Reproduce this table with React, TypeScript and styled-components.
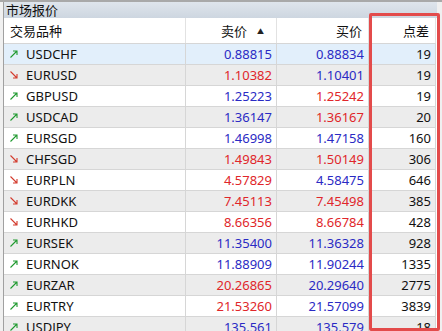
import React from 'react';
import styled, { createGlobalStyle } from 'styled-components';

// ===== Types =====
type Dir = 'up' | 'down';
type Tone = 'blue' | 'red';

interface Quote {
  symbol: string;
  dir: Dir;
  bid: string;
  bidTone: Tone;
  ask: string;
  askTone: Tone;
  spread: number;
}

// ===== Data =====
const quotes: Quote[] = [
  { symbol: 'USDCHF', dir: 'up', bid: '0.88815', bidTone: 'blue', ask: '0.88834', askTone: 'blue', spread: 19 },
  { symbol: 'EURUSD', dir: 'down', bid: '1.10382', bidTone: 'red', ask: '1.10401', askTone: 'blue', spread: 19 },
  { symbol: 'GBPUSD', dir: 'up', bid: '1.25223', bidTone: 'blue', ask: '1.25242', askTone: 'red', spread: 19 },
  { symbol: 'USDCAD', dir: 'up', bid: '1.36147', bidTone: 'blue', ask: '1.36167', askTone: 'red', spread: 20 },
  { symbol: 'EURSGD', dir: 'up', bid: '1.46998', bidTone: 'blue', ask: '1.47158', askTone: 'blue', spread: 160 },
  { symbol: 'CHFSGD', dir: 'down', bid: '1.49843', bidTone: 'red', ask: '1.50149', askTone: 'red', spread: 306 },
  { symbol: 'EURPLN', dir: 'down', bid: '4.57829', bidTone: 'red', ask: '4.58475', askTone: 'blue', spread: 646 },
  { symbol: 'EURDKK', dir: 'down', bid: '7.45113', bidTone: 'red', ask: '7.45498', askTone: 'red', spread: 385 },
  { symbol: 'EURHKD', dir: 'down', bid: '8.66356', bidTone: 'red', ask: '8.66784', askTone: 'red', spread: 428 },
  { symbol: 'EURSEK', dir: 'up', bid: '11.35400', bidTone: 'blue', ask: '11.36328', askTone: 'blue', spread: 928 },
  { symbol: 'EURNOK', dir: 'up', bid: '11.88909', bidTone: 'blue', ask: '11.90244', askTone: 'blue', spread: 1335 },
  { symbol: 'EURZAR', dir: 'up', bid: '20.26865', bidTone: 'red', ask: '20.29640', askTone: 'blue', spread: 2775 },
  { symbol: 'EURTRY', dir: 'up', bid: '21.53260', bidTone: 'red', ask: '21.57099', askTone: 'blue', spread: 3839 },
  { symbol: 'USDJPY', dir: 'up', bid: '135.561', bidTone: 'blue', ask: '135.579', askTone: 'blue', spread: 18 },
];

const toneColor: Record<Tone, string> = { blue: '#2a2ac4', red: '#e0262a' };

// ===== Styles =====
const GlobalStyle = createGlobalStyle`
  html, body { margin: 0; padding: 0; background: #f0f0f0; }
  body { font-family: "Noto Sans", "Noto Sans CJK SC", sans-serif; }
`;

const Window = styled.div`
  position: relative;
  width: 442px;
  height: 331px;
  overflow: hidden;
  background: #f0f0f0;
  border-top: 2px solid #a9a9a9;
  box-sizing: border-box;
  padding-left: 3px;
`;

const Panel = styled.div`
  width: 433px;
  border-left: 1px solid #a0a0a0;
  background: #fff;
`;

const TitleBar = styled.div`
  height: 16px;
  line-height: 15px;
  padding-left: 2px;
  font-size: 13px;
  color: #111;
  background: linear-gradient(#dfe5ec, #cdd6e0);
  font-family: "Noto Sans CJK SC", sans-serif;
`;

const Grid = styled.div`
  display: grid;
  grid-template-columns: 182px 91px 92px 67px;
`;

const HeadCell = styled.div<{ $align?: 'left' | 'right' }>`
  height: 25px;
  display: flex;
  align-items: center;
  justify-content: ${p => (p.$align === 'left' ? 'flex-start' : 'flex-end')};
  gap: 10px;
  padding: 0 6px;
  box-sizing: border-box;
  font-size: 13px;
  color: #111;
  background: #fff;
  border-right: 1px solid #e2e2e2;
  font-family: "Noto Sans CJK SC", sans-serif;
`;

const SortMark = styled.span`
  font-size: 7px;
  color: #222;
  margin-right: 6px;
`;

const Cell = styled.div<{ $bg: string; $align?: 'left' | 'right'; $color?: string }>`
  height: 21px;
  display: flex;
  align-items: center;
  justify-content: ${p => (p.$align === 'left' ? 'flex-start' : 'flex-end')};
  gap: 8px;
  padding: 0 4px 0 6px;
  box-sizing: border-box;
  font-size: 13px;
  color: ${p => p.$color ?? '#111'};
  background: ${p => p.$bg};
  border-top: 1px solid #d6d6d6;
  border-right: 1px solid #d6d6d6;
`;

const Highlight = styled.div`
  position: absolute;
  left: 369px;
  top: 11px;
  width: 71px;
  height: 318px;
  border: 3px solid #e34b4b;
  border-radius: 2px;
  box-sizing: border-box;
  pointer-events: none;
`;

// ===== Icons =====
const Arrow: React.FC<{ dir: Dir }> = ({ dir }) => {
  const color = dir === 'up' ? '#1f9a2f' : '#d33a2c';
  return (
    <svg width="8" height="8" viewBox="0 0 8 8">
      {dir === 'up' ? (
        <path d="M0.5 7.5 L7 1 M3 1 H7 V5" stroke={color} strokeWidth="1.1" fill="none" />
      ) : (
        <path d="M0.5 0.5 L7 7 M3 7 H7 V3" stroke={color} strokeWidth="1.1" fill="none" />
      )}
    </svg>
  );
};

// ===== Component =====
export default function App() {
  return (
    <>
      <GlobalStyle />
      <Window>
        <Panel>
          <TitleBar>市场报价</TitleBar>
          <Grid>
            <HeadCell $align="left">交易品种</HeadCell>
            <HeadCell>
              卖价<SortMark>▲</SortMark>
            </HeadCell>
            <HeadCell>买价</HeadCell>
            <HeadCell>点差</HeadCell>
            {quotes.map((q, i) => {
              const bg = i === 0 ? '#e2effb' : i % 2 === 1 ? '#ececec' : '#ffffff';
              return (
                <React.Fragment key={q.symbol}>
                  <Cell $bg={bg} $align="left">
                    <Arrow dir={q.dir} />
                    {q.symbol}
                  </Cell>
                  <Cell $bg={bg} $color={toneColor[q.bidTone]}>{q.bid}</Cell>
                  <Cell $bg={bg} $color={toneColor[q.askTone]}>{q.ask}</Cell>
                  <Cell $bg={bg}>{q.spread}</Cell>
                </React.Fragment>
              );
            })}
          </Grid>
        </Panel>
        <Highlight />
      </Window>
    </>
  );
}
